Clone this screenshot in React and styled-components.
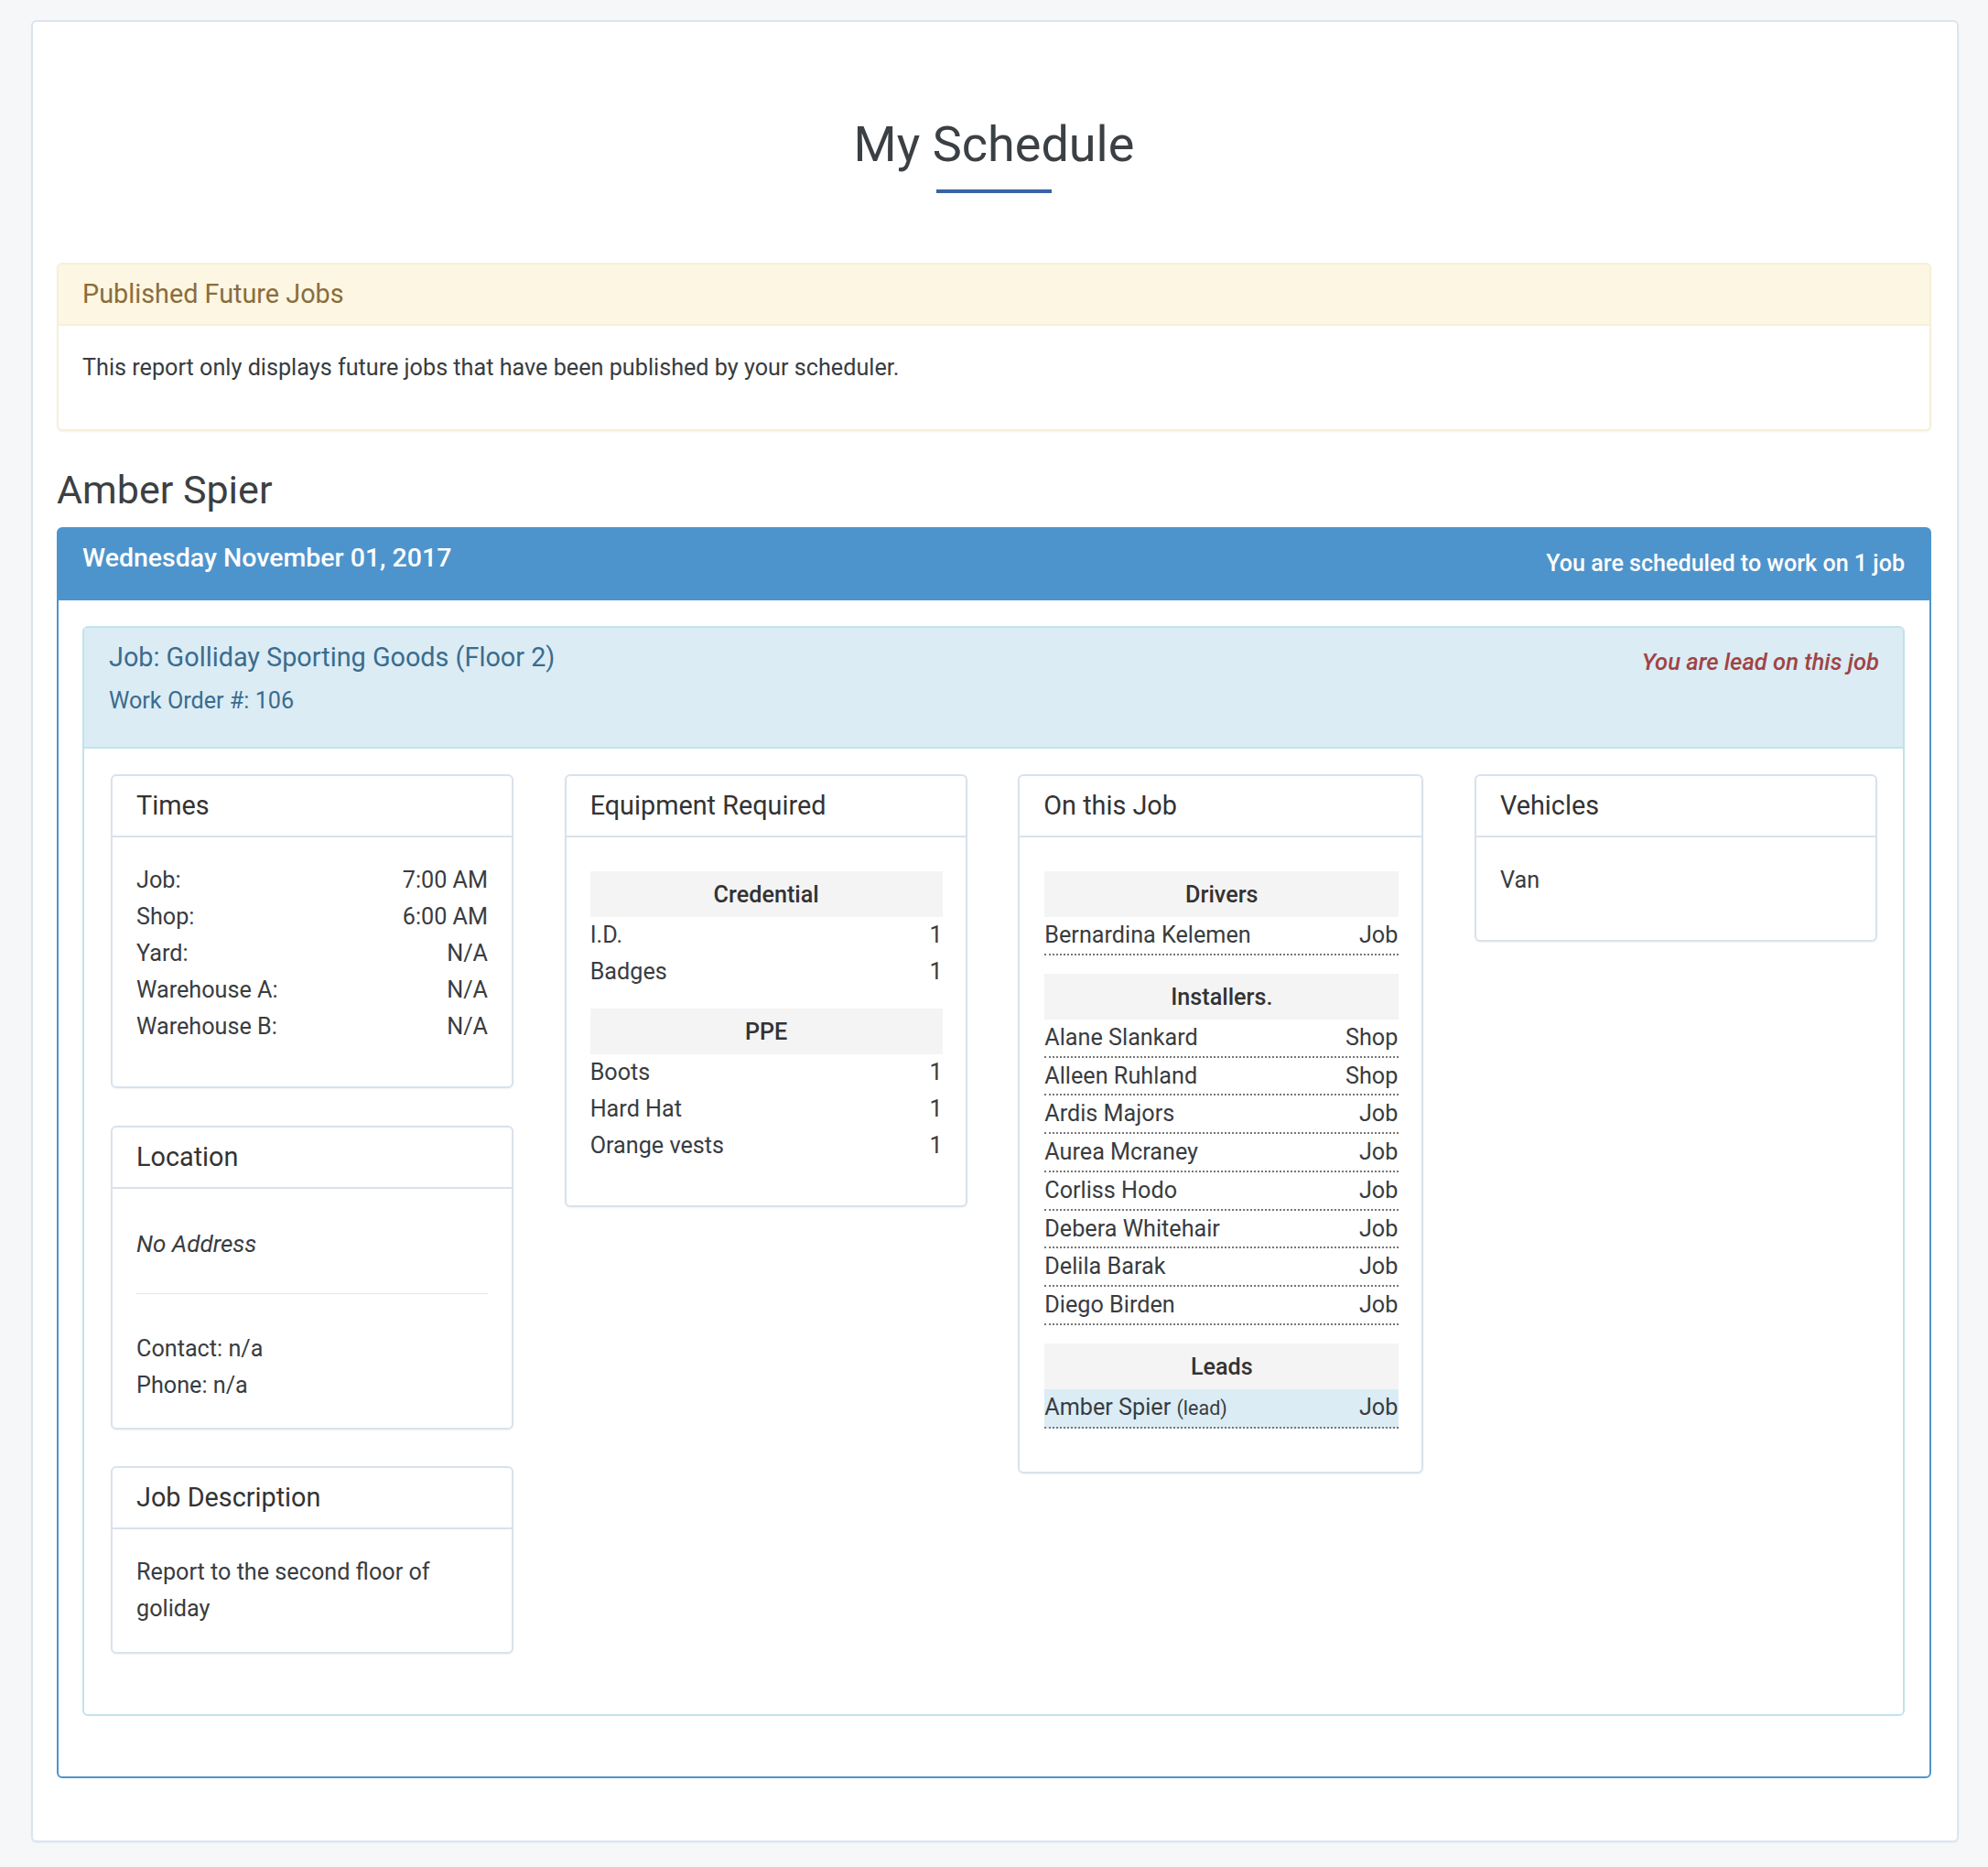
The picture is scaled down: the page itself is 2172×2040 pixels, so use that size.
import React from 'react';
import styled, { createGlobalStyle } from 'styled-components';

const GlobalStyle = createGlobalStyle`
  html, body {
    margin: 0;
    padding: 0;
  }
  body {
    background: #f6f7f9;
    font-family: Roboto, "Liberation Sans", sans-serif;
    font-size: 25.2px;
    line-height: 40px;
    color: #393c40;
  }
  * {
    box-sizing: border-box;
  }
`;

const Page = styled.div`
  padding: 22px 32px 28px 34px;
`;

const Sheet = styled.div`
  background: #fff;
  border: 2px solid #dbe5ee;
  border-radius: 6px;
  box-shadow: 0 1px 2px rgba(0, 0, 0, 0.05);
  padding: 0 28px 68px 26px;
`;

const TitleBlock = styled.div`
  padding-top: 98px;
  margin-bottom: 76px;
  text-align: center;
`;

const PageTitle = styled.h1`
  margin: 0;
  font-size: 54px;
  line-height: 72px;
  font-weight: 400;
  color: #3b4045;
`;

const TitleRule = styled.div`
  width: 126px;
  height: 4px;
  margin: 13px auto 0;
  background: #3a62a5;
`;

const Notice = styled.section`
  border: 2px solid #f8eeda;
  border-radius: 6px;
  box-shadow: 0 1px 2px rgba(0, 0, 0, 0.05);
  margin-bottom: 37px;
`;

const NoticeHead = styled.div`
  background: #fcf6e3;
  border-bottom: 2px solid #f8eeda;
  border-radius: 4px 4px 0 0;
  color: #8a6d3b;
  font-size: 28.8px;
  padding: 12px 26px 13px;
`;

const NoticeBody = styled.div`
  padding: 26px 26px 47px;
`;

const PersonName = styled.h3`
  margin: 0 0 14px;
  font-size: 43px;
  line-height: 54px;
  font-weight: 400;
  color: #3c4043;
`;

const DayPanel = styled.section`
  border: 2px solid #4e94cc;
  border-radius: 6px;
  padding: 0 27px 66px 26px;
`;

const DayHead = styled.div`
  display: flex;
  justify-content: space-between;
  background: #4e94cc;
  color: #fff;
  font-weight: 500;
  height: 78px;
  margin: 0 -27px 28px -26px;
  padding: 12px 27px 0 26px;
`;

const DayTitle = styled.div`
  font-size: 28.5px;
`;

const DayNote = styled.div`
  font-size: 25.1px;
  padding-top: 6px;
`;

const JobPanel = styled.section`
  border: 2px solid #c0e3ee;
  border-radius: 6px;
`;

const JobHead = styled.div`
  display: flex;
  justify-content: space-between;
  background: #dbecf5;
  border-bottom: 2px solid #c0e3ee;
  color: #3a6c8e;
  height: 132px;
  padding: 12px 26px 0 27px;
`;

const JobTitle = styled.div`
  font-size: 28.8px;
`;

const WorkOrder = styled.div`
  margin-top: 8px;
`;

const LeadNote = styled.div`
  color: #a04444;
  font-size: 25.6px;
  font-style: italic;
  font-weight: 500;
  padding-top: 5px;
`;

const JobColumns = styled.div`
  display: grid;
  grid-template-columns: 440px 440px 443px 440px;
  justify-content: space-between;
  align-items: start;
  padding: 28px 28px 66px 29px;
`;

const Column = styled.div`
  display: flex;
  flex-direction: column;
  gap: 40.5px;
`;

const Card = styled.section`
  border: 2px solid #d8e2ec;
  border-radius: 6px;
  box-shadow: 0 1px 2px rgba(0, 0, 0, 0.05);
`;

const CardHead = styled.div`
  border-bottom: 2px solid #d8e2ec;
  color: #333;
  font-size: 28.8px;
  padding: 12px 26px 13px;
`;

const CardBody = styled.div`
  padding: ${(p) => p.$pad};
`;

const KeyValue = styled.div`
  display: flex;
  justify-content: space-between;
`;

const AddressLine = styled.div`
  font-size: 26px;
  font-style: italic;
  padding-top: 14px;
`;

const Divider = styled.hr`
  border: 0;
  border-top: 1px solid #e5e5e5;
  margin: 34px 0 40px;
`;

const ListGroup = styled.div`
  margin-bottom: 20px;
`;

const ListTitle = styled.div`
  background: #f4f4f4;
  color: #333;
  font-weight: 500;
  height: 50px;
  line-height: 52px;
  text-align: center;
`;

const ListRow = styled.div`
  display: flex;
  justify-content: space-between;
  line-height: ${(p) => (p.$dotted ? '39.75px' : '40px')};
  padding-right: ${(p) => (p.$dotted ? '1px' : '0')};
  background: ${(p) => (p.$active ? '#dbecf5' : 'transparent')};
  border-bottom: ${(p) => (p.$dotted ? '2px dotted #777' : '0')};
`;

const Small = styled.small`
  font-size: 21.5px;
`;

const times = [
  ['Job:', '7:00 AM'],
  ['Shop:', '6:00 AM'],
  ['Yard:', 'N/A'],
  ['Warehouse A:', 'N/A'],
  ['Warehouse B:', 'N/A'],
];

const equipment = [
  { title: 'Credential', rows: [['I.D.', '1'], ['Badges', '1']] },
  { title: 'PPE', rows: [['Boots', '1'], ['Hard Hat', '1'], ['Orange vests', '1']] },
];

const crew = [
  { title: 'Drivers', rows: [['Bernardina Kelemen', 'Job']] },
  {
    title: 'Installers.',
    rows: [
      ['Alane Slankard', 'Shop'],
      ['Alleen Ruhland', 'Shop'],
      ['Ardis Majors', 'Job'],
      ['Aurea Mcraney', 'Job'],
      ['Corliss Hodo', 'Job'],
      ['Debera Whitehair', 'Job'],
      ['Delila Barak', 'Job'],
      ['Diego Birden', 'Job'],
    ],
  },
];

const App = () => (
  <Page>
    <GlobalStyle />
    <Sheet>
      <TitleBlock>
        <PageTitle>My Schedule</PageTitle>
        <TitleRule />
      </TitleBlock>

      <Notice>
        <NoticeHead>Published Future Jobs</NoticeHead>
        <NoticeBody>This report only displays future jobs that have been published by your scheduler.</NoticeBody>
      </Notice>

      <PersonName>Amber Spier</PersonName>

      <DayPanel>
        <DayHead>
          <DayTitle>Wednesday November 01, 2017</DayTitle>
          <DayNote>You are scheduled to work on 1 job</DayNote>
        </DayHead>

        <JobPanel>
          <JobHead>
            <div>
              <JobTitle>Job: Golliday Sporting Goods (Floor 2)</JobTitle>
              <WorkOrder>Work Order #: 106</WorkOrder>
            </div>
            <LeadNote>You are lead on this job</LeadNote>
          </JobHead>

          <JobColumns>
            <Column>
              <Card>
                <CardHead>Times</CardHead>
                <CardBody $pad="27px 26px 45px">
                  {times.map(([label, value]) => (
                    <KeyValue key={label}>
                      <span>{label}</span>
                      <span>{value}</span>
                    </KeyValue>
                  ))}
                </CardBody>
              </Card>
              <Card>
                <CardHead>Location</CardHead>
                <CardBody $pad="26px 26px 26px">
                  <AddressLine>No Address</AddressLine>
                  <Divider />
                  <div>Contact: n/a</div>
                  <div>Phone: n/a</div>
                </CardBody>
              </Card>
              <Card>
                <CardHead>Job Description</CardHead>
                <CardBody $pad="27px 26px 27px">Report to the second floor of goliday</CardBody>
              </Card>
            </Column>

            <Card>
              <CardHead>Equipment Required</CardHead>
              <CardBody $pad="37px 25px 25px 26px">
                {equipment.map((group) => (
                  <ListGroup key={group.title}>
                    <ListTitle>{group.title}</ListTitle>
                    {group.rows.map(([name, count]) => (
                      <ListRow key={name}>
                        <span>{name}</span>
                        <span>{count}</span>
                      </ListRow>
                    ))}
                  </ListGroup>
                ))}
              </CardBody>
            </Card>

            <Card>
              <CardHead>On this Job</CardHead>
              <CardBody $pad="37px 25px 27px 27px">
                {crew.map((group) => (
                  <ListGroup key={group.title}>
                    <ListTitle>{group.title}</ListTitle>
                    {group.rows.map(([name, where]) => (
                      <ListRow key={name} $dotted>
                        <span>{name}</span>
                        <span>{where}</span>
                      </ListRow>
                    ))}
                  </ListGroup>
                ))}
                <ListGroup>
                  <ListTitle>Leads</ListTitle>
                  <ListRow $dotted $active>
                    <span>
                      Amber Spier <Small>(lead)</Small>
                    </span>
                    <span>Job</span>
                  </ListRow>
                </ListGroup>
              </CardBody>
            </Card>

            <Card>
              <CardHead>Vehicles</CardHead>
              <CardBody $pad="27px 26px 45px">Van</CardBody>
            </Card>
          </JobColumns>
        </JobPanel>
      </DayPanel>
    </Sheet>
  </Page>
);

export default App;
